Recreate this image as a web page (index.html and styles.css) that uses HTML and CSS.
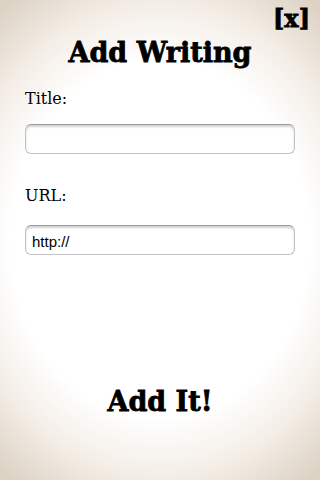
FILE: index.html
```html
<!DOCTYPE html>
<html>
<head>
<meta charset="utf-8">
<link rel="stylesheet" href="styles.css">
</head>
<body>
<div class="page">
  <div class="topbar"><span class="close">[x]</span></div>
  <h1 class="heading">Add Writing</h1>
  <form class="form">
    <label class="label" for="t">Title:</label>
    <input class="field" id="t" type="text" value="">
    <label class="label label-url" for="u">URL:</label>
    <input class="field field-url" id="u" type="text" value="http://">
  </form>
  <div class="submit">Add It!</div>
</div>
</body>
</html>
```
FILE: styles.css
```css
html, body {
  margin: 0;
  padding: 0;
}
body {
  width: 320px;
  height: 480px;
  overflow: hidden;
}
.page {
  box-sizing: border-box;
  width: 320px;
  height: 480px;
  background: radial-gradient(ellipse 78% 62% at 50% 50%, #ffffff 0%, #ffffff 60%, #f3ede5 80%, #ddd2c4 100%);
  display: flex;
  flex-direction: column;
  font-family: "DejaVu Serif", serif;
  color: #000;
}
.topbar {
  display: flex;
  justify-content: flex-end;
  padding: 5px 10px 0 0;
  height: 30px;
  box-sizing: border-box;
}
.close {
  font-weight: bold;
  font-size: 24px;
  line-height: 28px;
  -webkit-text-stroke: 0.8px #000;
}
.heading {
  margin: 7px 0 0 0;
  text-align: center;
  font-size: 27px;
  line-height: 32px;
  font-weight: bold;
  -webkit-text-stroke: 0.8px #000;
}
.form {
  display: flex;
  flex-direction: column;
  padding: 0 25px;
}
.label {
  font-size: 16px;
  line-height: 20px;
  margin-top: 20px;
  font-weight: normal;
}
.label-url {
  margin-top: 32px;
}
.field {
  box-sizing: border-box;
  margin-top: 15px;
  height: 30px;
  width: 270px;
  border: 1px solid #c4c4c4;
  border-top-color: #9a9a9a;
  border-radius: 6px;
  background: #fff;
  box-shadow: inset 0 2px 2px rgba(0,0,0,0.18);
  font-family: "Liberation Sans", Arial, sans-serif;
  font-size: 15px;
  padding: 2px 6px 0 6px;
  color: #000;
}
.field-url {
  margin-top: 19px;
}
.submit {
  margin-top: auto;
  margin-bottom: 62px;
  text-align: center;
  font-size: 27px;
  line-height: 32px;
  font-weight: bold;
  -webkit-text-stroke: 0.8px #000;
}
```
